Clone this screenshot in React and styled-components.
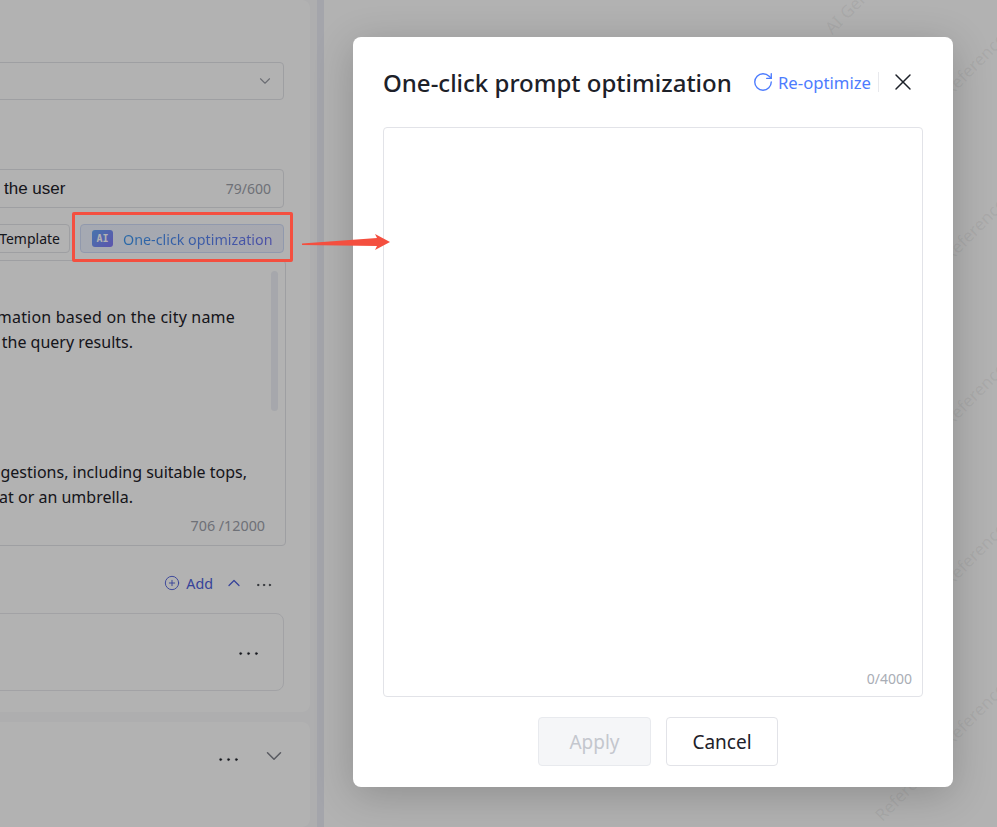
import React from 'react';
import styled, { createGlobalStyle } from 'styled-components';
import { ChevronDown, ChevronUp, RotateCw, X, Ellipsis, CirclePlus } from 'lucide-react';

const Global = createGlobalStyle`
  html, body { margin: 0; padding: 0; height: 100%; overflow: hidden; }
  body { font-family: "Noto Sans", "Open Sans", sans-serif; background: #fff; }
  #root { height: 100%; }
`;

const Page = styled.div`
  position: relative;
  width: 997px;
  height: 827px;
  overflow: hidden;
  display: flex;
  background: #fff;
`;

const LeftPane = styled.div`
  width: 310px;
  height: 100%;
  background: #f9f9fb;
  display: flex;
  flex-direction: column;
  gap: 10px;
  overflow: hidden;
`;

const Splitter = styled.div`
  width: 7px;
  margin-left: 7px;
  background: #ebedf5;
  box-shadow: -7px 0 0 #f9f9fb;
`;

const Card = styled.div`
  margin-left: -20px;
  background: #fff;
  border-radius: 8px;
  padding: ${p => p.$padding || '0'};
  flex-shrink: ${p => (p.$grow ? 1 : 0)};
  flex-grow: ${p => (p.$grow ? 1 : 0)};
`;

const SelectBox = styled.div`
  height: 36px;
  border: 1px solid #e3e4e9;
  border-radius: 4px;
  display: flex;
  align-items: center;
  justify-content: flex-end;
  padding-right: 9px;
  color: #9a9da6;
  margin-bottom: 69px;
`;

const InputBox = styled.div`
  height: 37px;
  border: 1px solid #e3e4e9;
  border-radius: 4px;
  display: flex;
  align-items: center;
  justify-content: space-between;
  padding: 0 12px 0 23px;
  margin-bottom: 16px;
`;

const InputText = styled.span`
  font-family: "Liberation Sans", Arial, sans-serif;
  font-size: 17px;
  color: #1d2129;
`;

const Count = styled.span`
  font-size: 14px;
  color: #9ea2ab;
`;

const ButtonRow = styled.div`
  display: flex;
  justify-content: flex-end;
  gap: 10px;
  height: 29px;
  margin-bottom: 7px;
`;

const TemplateButton = styled.div`
  width: 89px;
  border: 1px solid #e3e4e9;
  border-radius: 4px;
  font-size: 14px;
  color: #1d2129;
  display: flex;
  align-items: center;
  justify-content: flex-end;
  padding-right: 9px;
  box-sizing: border-box;
`;

const AiButton = styled.div`
  width: 204px;
  box-sizing: border-box;
  border: 1px solid #d0dcf8;
  border-radius: 4px;
  background: linear-gradient(90deg, #edf3ff, #f0f1fb);
  display: flex;
  align-items: center;
  padding-left: 11px;
  gap: 10px;
`;

const AiBadge = styled.span`
  width: 21px;
  height: 17px;
  border-radius: 3px;
  background: linear-gradient(135deg, #66a8f8, #8578f8);
  color: #fff;
  font-family: "DejaVu Sans Mono", monospace;
  font-size: 10px;
  font-weight: 700;
  display: flex;
  align-items: center;
  justify-content: center;
`;

const AiLabel = styled.span`
  font-size: 14.3px;
  padding-top: 1px;
  background: linear-gradient(90deg, #3a96f0, #6e72ee);
  -webkit-background-clip: text;
  background-clip: text;
  color: transparent;
`;

const PromptArea = styled.div`
  position: relative;
  height: 286px;
  margin-right: -2px;
  border: 1px solid #e3e4e9;
  border-radius: 4px;
  box-sizing: border-box;
  padding-top: 44px;
  margin-bottom: 25px;
`;

const PromptLine = styled.div`
  height: 25px;
  line-height: 25px;
  font-size: 16px;
  color: #1d2129;
  white-space: nowrap;
  display: flex;
  justify-content: flex-end;
  padding-right: ${p => p.$end}px;
  margin-top: ${p => p.$gap || 0}px;
  letter-spacing: ${p => p.$spacing || 0}px;
`;

const PromptThumb = styled.div`
  position: absolute;
  top: 10px;
  right: 7px;
  width: 7px;
  height: 140px;
  border-radius: 4px;
  background: #eef0f6;
`;

const PromptCount = styled(Count)`
  position: absolute;
  right: 20px;
  bottom: 10px;
  font-size: 14.3px;
`;

const SectionHeader = styled.div`
  height: 24px;
  display: flex;
  align-items: center;
  justify-content: flex-end;
  padding-right: 10px;
  margin-bottom: 18px;
  color: #4e5fdc;
`;

const AddLink = styled.span`
  display: flex;
  align-items: center;
  gap: 6px;
  font-size: 14.3px;
  margin-right: 11px;
`;

const MoreIcon = styled(Ellipsis)`
  color: #1d2129;
  fill: currentColor;
  margin-top: ${p => p.$top || 0}px;
  margin-left: ${p => p.$left || 0}px;
  margin-right: ${p => p.$right || 0}px;
`;

const ToolCard = styled.div`
  height: 78px;
  box-sizing: border-box;
  border: 1px solid #e8e9ed;
  border-radius: 8px;
  display: flex;
  align-items: center;
  justify-content: flex-end;
  padding-right: 21px;
`;

const CollapsedRow = styled.div`
  height: 68px;
  display: flex;
  align-items: center;
  justify-content: flex-end;
  padding-right: 23px;
  color: #80838c;
`;

const RightPane = styled.div`
  flex: 1;
  background: #fff;
`;

const Mask = styled.div`
  position: absolute;
  inset: 0;
  background: rgba(0, 0, 0, 0.3);
`;

const Watermark = styled.span`
  position: absolute;
  left: ${p => p.$x}px;
  top: ${p => p.$y}px;
  transform-origin: left bottom;
  transform: translateY(-100%) rotate(-45deg);
  font-size: 17px;
  line-height: 20px;
  color: rgba(120, 122, 130, 0.1);
  white-space: nowrap;
`;

const Modal = styled.div`
  position: absolute;
  left: 353px;
  top: 37px;
  width: 600px;
  height: 750px;
  box-sizing: border-box;
  padding: 0 30px;
  background: #fff;
  border-radius: 8px;
  box-shadow: 0 8px 40px rgba(0, 0, 0, 0.2);
  display: flex;
  flex-direction: column;
`;

const ModalHeader = styled.div`
  height: 90px;
  flex-shrink: 0;
  display: flex;
  align-items: center;
`;

const ModalTitle = styled.h2`
  margin: 0;
  font-size: 24px;
  font-weight: 500;
  color: #1d2129;
  flex: 1;
  white-space: nowrap;
`;

const Refresh = styled.span`
  display: flex;
  align-items: center;
  gap: 4px;
  font-size: 16.7px;
  color: #4d7cfe;
  white-space: nowrap;
`;

const HeaderDivider = styled.span`
  width: 1px;
  height: 20px;
  background: #e8e9ed;
  margin: 0 10px 0 7px;
`;

const CloseIcon = styled(X)`
  color: #1d2129;
  margin-right: 6px;
`;

const ResultBox = styled.div`
  height: 570px;
  box-sizing: border-box;
  border: 1px solid #e2e3e8;
  border-radius: 4px;
  display: flex;
  align-items: flex-end;
  justify-content: flex-end;
  padding: 0 10px 8px 0;
`;

const ResultCount = styled.span`
  font-size: 14px;
  color: #a9adb5;
`;

const ModalFooter = styled.div`
  margin-top: 20px;
  padding-left: 10px;
  display: flex;
  justify-content: center;
  gap: 15px;
`;

const FooterButton = styled.button`
  width: ${p => p.$width}px;
  height: 49px;
  border-radius: 4px;
  border: 1px solid ${p => (p.disabled ? '#e8eaee' : '#e2e3e8')};
  background: ${p => (p.disabled ? '#f5f6f8' : '#fff')};
  color: ${p => (p.disabled ? '#c4c7ce' : '#1d2129')};
  font-family: inherit;
  font-size: 19px;
  padding: 0;
`;

const Highlight = styled.div`
  position: absolute;
  left: 72px;
  top: 212px;
  width: 221px;
  height: 50px;
  box-sizing: border-box;
  border: 3px solid #f44f3f;
  border-radius: 2px;
`;

const Arrow = styled.svg`
  position: absolute;
  left: 300px;
  top: 230px;
`;

const marks = [
  { x: 835, y: 38, text: 'AI Generated' },
  { x: 953, y: 100, text: 'Reference' },
  { x: 953, y: 265, text: 'Reference' },
  { x: 953, y: 430, text: 'Reference' },
  { x: 953, y: 590, text: 'Reference' },
  { x: 953, y: 750, text: 'Reference' },
  { x: 885, y: 825, text: 'Reference' },
];

export default function App() {
  return (
    <>
      <Global />
      <Page>
        <LeftPane>
          <Card $padding="62px 26px 21px 0">
            <SelectBox><ChevronDown size={18} strokeWidth={1.5} /></SelectBox>
            <InputBox>
              <InputText>the user</InputText>
              <Count>79/600</Count>
            </InputBox>
            <ButtonRow>
              <TemplateButton>Template</TemplateButton>
              <AiButton>
                <AiBadge>AI</AiBadge>
                <AiLabel>One-click optimization</AiLabel>
              </AiButton>
            </ButtonRow>
            <PromptArea>
              <PromptThumb />
              <PromptLine $end={50} $spacing={0.2}>mation based on the city name</PromptLine>
              <PromptLine $end={152}>the query results.</PromptLine>
              <PromptLine $gap={105} $end={38}>gestions, including suitable tops,</PromptLine>
              <PromptLine $end={152}>at or an umbrella.</PromptLine>
              <PromptCount>706 /12000</PromptCount>
            </PromptArea>
            <SectionHeader>
              <AddLink><CirclePlus size={16} strokeWidth={1.4} />Add</AddLink>
              <ChevronUp size={20} strokeWidth={1.5} />
              <MoreIcon size={20} strokeWidth={0.5} $top={4} $left={10} />
            </SectionHeader>
            <ToolCard><MoreIcon size={27} strokeWidth={0.3} $top={3} /></ToolCard>
          </Card>
          <Card $grow>
            <CollapsedRow>
              <MoreIcon size={27} strokeWidth={0.3} $top={6} $right={19} />
              <ChevronDown size={26} strokeWidth={1.4} />
            </CollapsedRow>
          </Card>
        </LeftPane>
        <Splitter />
        <RightPane />
        {marks.map(mark => (
          <Watermark key={`${mark.x}-${mark.y}`} $x={mark.x} $y={mark.y}>{mark.text}</Watermark>
        ))}
        <Mask />
        <Modal>
          <ModalHeader>
            <ModalTitle>One-click prompt optimization</ModalTitle>
            <Refresh><RotateCw size={22} strokeWidth={1.5} />Re-optimize</Refresh>
            <HeaderDivider />
            <CloseIcon size={28} strokeWidth={1.25} />
          </ModalHeader>
          <ResultBox><ResultCount>0/4000</ResultCount></ResultBox>
          <ModalFooter>
            <FooterButton $width={113} disabled>Apply</FooterButton>
            <FooterButton $width={112}>Cancel</FooterButton>
          </ModalFooter>
        </Modal>
        <Highlight />
        <Arrow width="92" height="26" viewBox="0 0 92 26">
          <path d="M2 13.5 L77 8 L75 4 L90 12 L75 20 L77 16 L2 15 Z" fill="#f44f3f" />
        </Arrow>
      </Page>
    </>
  );
}
